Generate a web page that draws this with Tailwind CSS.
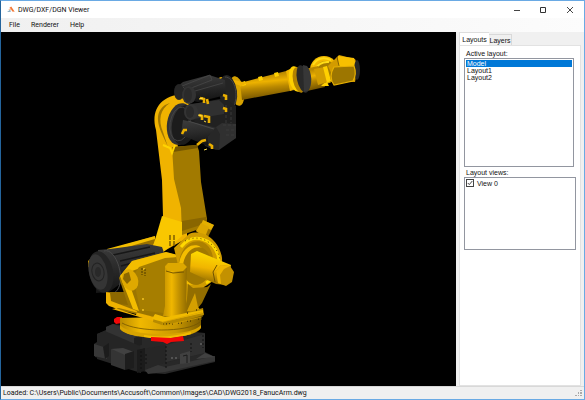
<!DOCTYPE html>
<html lang="en">
<head>
<meta charset="utf-8">
<title>DWG/DXF/DGN Viewer</title>
<script src="https://cdn.jsdelivr.net/npm/@tailwindcss/browser@4"></script>
</head>
<body class="flex h-screen flex-col overflow-hidden border border-[#6aaae4] border-l-[#24649c] bg-[#f0f0f0] font-[Roboto,sans-serif] text-[7px] leading-[10px] text-[#111]">
<header class="flex h-[17px] shrink-0 items-center bg-white pl-[6px]">
  <svg class="h-[7px] w-[8px]" viewBox="0 0 8 7" aria-hidden="true"><path d="M0 6 3.2 3.8 3.8 5.8Z" fill="#7fa6bd"/><path d="M2.2 2 4.2 .5 7.7 5.8 5.3 5.5 3.7 2.7Z" fill="#f47735"/><path d="M1 4 3.6 2.5 4.4 3.5Z" fill="#f6a06b"/></svg>
  <h1 class="ml-[3px] flex-1">DWG/DXF/DGN Viewer</h1>
  <button aria-label="Minimize" class="flex h-full w-[26px] items-center justify-center"><svg class="size-[8px]" viewBox="0 0 8 8"><path d="M1 4.5h6" stroke="#444"/></svg></button>
  <button aria-label="Maximize" class="flex h-full w-[26px] items-center justify-center"><svg class="size-[8px]" viewBox="0 0 8 8"><path d="M1.5 1.5h5v5h-5z" fill="none" stroke="#333"/></svg></button>
  <button aria-label="Close" class="flex h-full w-[28px] items-center justify-center"><svg class="size-[8px]" viewBox="0 0 8 8"><path d="m1 1 6 6M7 1 1 7" stroke="#333" stroke-width=".9"/></svg></button>
</header>
<nav class="flex h-[14px] shrink-0 items-center gap-[11px] bg-gradient-to-r from-[#f0f0f0] to-[#fcfcfc] pl-[8px]">
  <button>File</button><button>Renderer</button><button>Help</button>
</nav>
<div class="flex min-h-0 flex-1">
  <main class="min-w-0 flex-1 bg-black">
    <svg class="h-full w-full" viewBox="1 32 455 354" role="img" aria-label="Fanuc robot arm model">
      <defs>
        <linearGradient id="fore" x1="0" y1="0" x2=".18" y2="1"><stop offset=".2" stop-color="#b88700"/><stop offset=".45" stop-color="#edb200"/><stop offset=".65" stop-color="#b98800"/><stop offset="1" stop-color="#735300"/></linearGradient>
        <linearGradient id="upright"><stop offset="0" stop-color="#c39100"/><stop offset=".35" stop-color="#f0b700"/><stop offset=".6" stop-color="#c89600"/><stop offset="1" stop-color="#8c6800"/></linearGradient>
        <linearGradient id="cyl" x1=".5" y1="0" x2=".3" y2="1"><stop offset="0" stop-color="#ffe000"/><stop offset=".5" stop-color="#f1b500"/><stop offset="1" stop-color="#805e00"/></linearGradient>
        <linearGradient id="motor" x1="0" y1="0" x2=".15" y2="1"><stop offset="0" stop-color="#3d3d3d"/><stop offset=".5" stop-color="#2b2b2b"/><stop offset="1" stop-color="#151515"/></linearGradient>
        <linearGradient id="table"><stop offset="0" stop-color="#b98a00"/><stop offset=".25" stop-color="#f0b800"/><stop offset=".7" stop-color="#c79600"/><stop offset="1" stop-color="#7d5d00"/></linearGradient>
      </defs>
      <!-- base -->
      <path d="m94 344 3-2v-8l9-4v-3l7-3 92 9v19l10 5v5l-50 12-15-1-55-16z" fill="#282828"/>
      <path d="m106 327 7-3 28 10-2 12-5 1-28-10z" fill="#333"/>
      <path d="m134 338 8-3v10l-8 2z" fill="#202020"/>
      <path d="m97 334 8-3 35 15 1 27-44-14z" fill="#252525"/>
      <path d="m94 344 13 4v11l-13-3z" fill="#383838"/><path d="m103 347 6-4v13l-4 3z" fill="#1c1c1c"/>
      <path d="m111 349 14 5v16l-14-5z" fill="#343434"/><path d="m111 349 12-1 11 4-9 3z" fill="#414141"/><path d="m125 354 9-3v17l-9 2z" fill="#1d1d1d"/>
      <path d="m137 350 29-5 39-11v19l-40 10-24 8z" fill="#262626"/>
      <path d="m166 345 39-11v19l-39 9z" fill="#303030"/><path d="m137 350 8-2v23l-8 2z" fill="#1b1b1b"/>
      <path d="m145 370 13-5 7 2 50-11v5l-50 11-17 2z" fill="#373737"/>
      <path d="m180 354 10-3v12l-10 1zM205 353l10 4-19 2z" fill="#414141"/><path d="m183 356 4-1v8" fill="none" stroke="#1b1b1b"/>
      <path d="M141 351v19m5-16v12m20-20v23m37-34v13m-12-5v9" stroke="#111" stroke-dasharray="2 2" fill="none"/>
      <path d="M171 358h2m2 0h2m23-14h2" stroke="#777"/>
      <path d="m114 319 3-2h5v6l-6 1-2-2z" fill="#f20808"/>
      <!-- turntable -->
      <path d="M120 318v10c3 12 78 14 81-1v-11z" fill="url(#table)"/>
      <path d="M120 325c9 12 72 12 81 0v3c-9 13-72 13-81 1z" fill="#d8a400"/>
      <path d="M122 323c15 9 65 10 78-1" fill="none" stroke="#745600" stroke-width=".8"/>
      <path d="M144 336c16 3 33 1 47-3" fill="none" stroke="#f2bd00" stroke-width="2"/>
      <path d="m151 337 20 1 12-2 1 5-13 1-4 2-4-2-12-1z" fill="#f20808"/>
      <!-- rear carriage -->
      <path d="m107 250 48-14 2 13-49 7z" fill="#987000"/><path d="m107 249 48-13v3l-48 14z" fill="#f3bd00"/>
      <!-- upper arm -->
      <path d="M156 130c-5-19 3-31 20-35l18 2-8 12-12 13 6 38 2 27 5 33v18l-28 16-9-3 10-20 3-15-1-36z" fill="#f0b300"/>
      <path d="M170 103c-10 6-12 17-7 29l5 15-6-13c-7-16-4-24 3-29z" fill="#a17700"/>
      <path d="m172 147 25-2 2 6 2 31 6 37-2 8-23 8-1-27-7-29z" fill="#a27a00"/>
      <path d="m173 147 24-2 1 3-25 4z" fill="#745600"/>
      <path d="m163 145 7 3 2 5 3-8" fill="none" stroke="#ffd400" stroke-width="2"/>
      <path d="m182 221 24-4 1 6-25 8z" fill="#896600"/>
      <path d="m162 216 20 6v14l-22 19-8-5z" fill="#f9c700"/><path d="M170 235v12m4-12v12" stroke="#775900" stroke-width="1.4" stroke-dasharray="5 1"/>
      <!-- forearm -->
      <ellipse cx="237" cy="91" rx="7" ry="15" transform="rotate(-10 237 91)" fill="#d7a200"/>
      <path d="M237 82q7 2 6 17" fill="none" stroke="#ffd500" stroke-width="2"/>
      <path d="m240 83 50-13 5 20-53 10z" fill="url(#fore)"/>
      <path d="m242 82 3-1 1 4-4 1zm16-5 4-1 1 4-4 1zm16-4 4-1 1 4-4 1z" fill="#ffd100"/>
      <path d="m286 71 4-2 5 20-5 2z" fill="#f0b600"/>
      <ellipse cx="296" cy="79" rx="7" ry="13" transform="rotate(-12 296 79)" fill="#ffd000"/><ellipse cx="299" cy="80" rx="6" ry="13" transform="rotate(-12 299 80)" fill="#b28200"/>
      <ellipse cx="324" cy="70" rx="14" ry="14" fill="#f3b900"/><ellipse cx="326" cy="72" rx="11" ry="11" fill="#a67d00"/><path d="M313 65q6-10 18-5m-16 9q5-8 14-7" fill="none" stroke="#ffdc17" stroke-width="2"/>
      <path d="m305 69 13-3 7 21-18 4z" fill="url(#fore)"/>
      <ellipse cx="303" cy="79" rx="6" ry="14" transform="rotate(-12 303 79)" fill="#292929"/><path d="m303 65 4 1c5 6 6 19 1 25l-4 1" fill="#373737"/>
      <path d="m314 69 11-2 5 14-12 4z" fill="#d29d00"/><path d="m323 67 4-1 4 15-4 2zM323 84l4-2 2 4-8 0z" fill="#ffd000"/>
      <path d="m328 66 11-11 16 4 3 7-3 16-20-1z" fill="#d29b00"/><path d="m338 56 16 2 2 8-18 1z" fill="#f7bf00"/><path d="m337 57 2 9" stroke="#805e00"/>
      <ellipse cx="357" cy="70" rx="3" ry="10" fill="#272727"/>
      <path d="m334 67 20-1q3 8-1 15l-19 4q-6-8 0-18z" fill="#9d7600" stroke="#e8b000" stroke-width="1.2"/>
      <!-- shoulder drives -->
      <path d="m216 79 5-2 26 6-5 3z" fill="#efb200"/>
      <ellipse cx="180" cy="124" rx="13" ry="21" transform="rotate(9 180 124)" fill="#333"/><ellipse cx="184" cy="125" rx="12" ry="20" transform="rotate(9 184 125)" fill="#1c1c1c"/>
      <ellipse cx="180" cy="124" rx="10" ry="17" transform="rotate(9 180 124)" fill="none" stroke="#464646" stroke-width=".8"/>
      <ellipse cx="228" cy="92" rx="9" ry="17" transform="rotate(-8 228 92)" fill="#242424"/><path d="M225 77c9 0 14 16 9 29" fill="none" stroke="#444"/>
      <path d="m178 86 5-4 26-7 16 5 1 15-28 7-17-4z" fill="url(#motor)"/>
      <path d="m182 86 28-11 2 5-26 10zM195 91l28-8" fill="none" stroke="#484848" stroke-width=".8"/>
      <ellipse cx="179" cy="92" rx="5" ry="8" fill="#252525"/><ellipse cx="189" cy="95" rx="7" ry="9" fill="#333"/><ellipse cx="188" cy="95" rx="4" ry="7" fill="#2a2a2a"/>
      <path d="m188 105 37-7 11 8v32l-20 12-11-4-11-26z" fill="#212121"/>
      <path d="m191 104 28-4 5 5v9l-30 5z" fill="#303030"/><ellipse cx="191" cy="112" rx="7" ry="8" fill="#343434"/><ellipse cx="190" cy="112" rx="4" ry="6" fill="#292929"/>
      <path d="m183 120 34 8 1 16-10 2-27-11z" fill="url(#motor)"/><path d="m188 121 29 9" stroke="#494949"/>
      <path d="m216 127 6-4 14 1v14l-17 12-11-3v-10z" fill="#303030"/><path d="m216 127 4 7-1 16-11-3v-10z" fill="#272727"/>
      <path d="M226 105v20m5-18v16m-8 2h13m-10 5h10m-10 5h8" stroke="#3a3a3a" stroke-dasharray="3 2"/>
      <g fill="none" stroke="#eaaf00" stroke-width="2.6"><path d="m200 98 4 1v4m3-4 1 5M223 95l3 1v4m-27 15 3 1v4m2-4 5 1v6m14-15 3 1v3m-44 22 2-4h3m10 15 5-4 4-1m3 4 3 2v3"/></g>
      <path d="m199 99 4-1m-5 17 4 1m2 5 2 1m-2 28 3-1" stroke="#ffe04a"/>
      <!-- rear motor -->
      <path d="m98 250 12-1 37-5 15 3 5 14-40 18-18 13-13 1z" fill="url(#motor)"/>
      <path d="m113 255 37-8m-30 14 35-8m-34 13 34-9m-32 15 25-9" stroke="#171717" stroke-width="1.5"/><path d="M104 251c13-4 24 34 10 42" fill="none" stroke="#494949"/>
      <path d="m88 261 3-3v10l-3-1z" fill="#b88a00"/><ellipse cx="101" cy="272" rx="12" ry="21" transform="rotate(-12 101 272)" fill="#242424"/><ellipse cx="98" cy="272" rx="9" ry="18" transform="rotate(-12 98 272)" fill="#353535"/><ellipse cx="98" cy="272" rx="6" ry="9" transform="rotate(-12 98 272)" fill="none" stroke="#222"/><ellipse cx="98" cy="272" rx="3" ry="5" fill="#292929"/>
      <!-- carriage -->
      <path d="m107 292 19 0 10 22-27-9z" fill="#8c6800"/>
      <path d="m120 276 12-15 34-9 23 7-1 59-25 1-46-9-9-7 20 2-9-27z" fill="#9b7500"/>
      <path d="m120 276 12-15 34-9 16 4-28 7-22 8-5 6 12 34-6-2z" fill="#f3bd00"/>
      <path d="m133 276 6-9 26-9 14-1v58l-39-5z" fill="#a67e00"/>
      <ellipse cx="130" cy="280" rx="8" ry="11" transform="rotate(-20 130 280)" fill="#dfa900"/><path d="m124 274 5-2 2 8-4 4-4-5z" fill="#8c6800"/>
      <path d="m106 292 4 1 1 8 26 10-1 4-27-9-3-3zM112 309l48 14 2-4-43-11z" fill="#efb200"/>
      <g fill="#f4c520"><circle cx="144" cy="269" r="1"/><circle cx="143" cy="299" r="1"/><circle cx="143" cy="310" r="1"/></g>
      <path d="M142 268v7m3-6v7" stroke="#4d3900" stroke-dasharray="2 1"/>
      <!-- rotary joint -->
      <path d="m196 231 7-11 11 5-7 14z" fill="#9a7200"/><path d="m203 220 11 5-3 5-10-5z" fill="#e3af00"/><path d="m196 231 5-8 8 4-4 10z" fill="#dda700"/>
      <path d="m174 248 15-14c14-6 31 7 33 24 1 15-7 23-18 29l-7 18-9 3z" fill="#d09c00"/>
      <path d="M181 247c12-15 31-9 37 8 3 14-2 23-12 28" fill="none" stroke="#ffd800" stroke-width="3"/>
      <path d="M185 241c15-9 34 4 35 20m-2 6-4 9" fill="none" stroke="#664b00" stroke-dasharray="1 3"/>
      <ellipse cx="196" cy="263" rx="17" ry="22" transform="rotate(10 196 263)" fill="#ac8000"/><ellipse cx="193" cy="265" rx="14" ry="20" transform="rotate(10 193 265)" fill="#f4bd00"/><ellipse cx="197" cy="266" rx="14" ry="19" transform="rotate(10 197 266)" fill="#a07800"/>
      <path d="m191 254 6-3 34 14-5 20-10-1-26-12z" fill="url(#cyl)"/>
      <path d="m216 271 5-6 9 1 4 6-2 10-6 4-8-3z" fill="#c39100"/><path d="m216 271 5-6 9 1-6 3-4 6 1 9-3-1z" fill="#efb600"/><path d="m217 265-4 7 2 10" fill="none" stroke="#6f5200"/>
      <path d="m188 284 5 4 14-1 4-3-9 19-8 10h-8z" fill="#936e00"/><path d="m195 293 3 14 6 7-17-3z" fill="#d5a000"/>
      <!-- balance column -->
      <path d="m165 266 3-3h15l4 4-1 45 2 5-25-1 2-10z" fill="url(#upright)"/><path d="m165 267 4-4h14l4 4-4 4h-14z" fill="#dda800"/><path d="m166 271 7 2 11-1" fill="none" stroke="#765700"/>
      <path d="m154 315 10 4 39-11 1 7-39 11-12-4z" fill="#b68a00"/><path d="m155 314 10 3 38-7v3l-40 9-11-3z" fill="#f1bb00"/>
      <path d="M163 324h12m3-1h6m3-2h6m5-2h4m-6-9h3m-12 3h3" stroke="#4b3800" stroke-width="1.3" stroke-dasharray="1 2"/>
      <path d="m163 322 39-10v5l-39 9z" fill="none" stroke="#d8a400" stroke-width=".7"/>
    </svg>
  </main>
  <aside class="flex w-[128px] shrink-0 flex-col pl-[3px] pr-[3px] font-['Liberation_Sans',sans-serif] text-[7px] leading-[7px]">
    <div role="tablist" class="flex h-[13px] shrink-0 items-end">
      <button role="tab" aria-selected="true" class="h-[13px] w-[30px] border-l border-t border-[#ddd] bg-white">Layouts</button>
      <button role="tab" aria-selected="false" class="h-[11px] w-[23px] border-r border-t border-[#d9d9d9]">Layers</button>
    </div>
    <section role="tabpanel" class="flex min-h-0 flex-1 flex-col border border-[#e2e2e2] bg-white px-[4px] pt-[4px]">
      <h2 id="active" class="pl-[2px]">Active layout:</h2>
      <ul role="listbox" aria-labelledby="active" class="mr-[2px] mt-[1px] h-[109px] border border-[#9296a0] p-px">
        <li role="option" aria-selected="true" class="bg-[#0078d7] pl-px text-white">Model</li>
        <li role="option" aria-selected="false" class="pl-px">Layout1</li>
        <li role="option" aria-selected="false" class="pl-px">Layout2</li>
      </ul>
      <h2 class="mt-[2px] pl-[2px]">Layout views:</h2>
      <div class="mt-[1px] h-[73px] border border-[#9296a0] p-px">
        <label class="flex items-center gap-[3px]"><span class="relative flex"><input type="checkbox" checked class="peer size-[8px] appearance-none border border-[#444]"><svg class="pointer-events-none absolute inset-0 hidden size-[8px] peer-checked:block" viewBox="0 0 8 8"><path d="m1.8 4 1.5 1.6L6.3 2" fill="none" stroke="#333" stroke-width=".9"/></svg></span>View 0</label>
      </div>
    </section>
  </aside>
</div>
<footer class="flex h-[13px] shrink-0 items-center justify-between border-t border-[#d8d8d8] pl-[2px] pr-px">
  <span>Loaded: C:\Users\Public\Documents\Accusoft\Common\Images\CAD\DWG2018_FanucArm.dwg</span>
  <svg class="size-[8px]" viewBox="0 0 8 8" aria-hidden="true"><path d="M5 1h2v1H5zM3 3h1v2H3zM5 3h2v2H5zM0 6h2v1H0zM3 6h1v1H3zM5 6h2v1H5z" fill="#aaa"/></svg>
</footer>
</body>
</html>
